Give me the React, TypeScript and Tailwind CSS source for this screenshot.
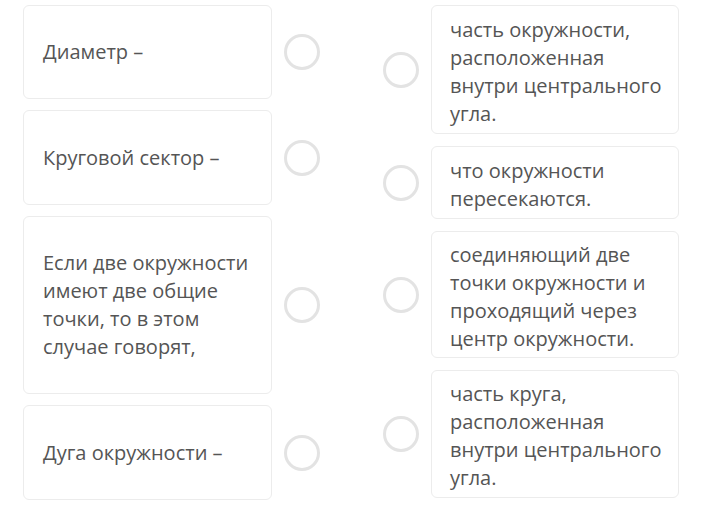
import React from "react";

type Item = { text: string; h: string };

const LEFT: Item[] = [
  { text: "Диаметр –", h: "h-[94px]" },
  { text: "Круговой сектор –", h: "h-[95px]" },
  {
    text: "Если две окружности имеют две общие точки, то в этом случае говорят,",
    h: "h-[178px]",
  },
  { text: "Дуга окружности –", h: "h-[95px]" },
];

const RIGHT: Item[] = [
  { text: "часть окружности, расположенная внутри центрального угла.", h: "h-[129px]" },
  { text: "что окружности пересекаются.", h: "h-[73px]" },
  {
    text: "соединяющий две точки окружности и проходящий через центр окружности.",
    h: "h-[127px]",
  },
  { text: "часть круга, расположенная внутри центрального угла.", h: "h-[128px]" },
];

const Circle = () => (
  <div className="w-[36px] h-[36px] shrink-0 rounded-full border-[3px] border-[#e3e3e3] bg-white" />
);

const Card: React.FC<{ item: Item; w: string; px: string }> = ({ item, w, px }) => (
  <div
    className={`${w} ${item.h} ${px} shrink-0 flex items-center rounded-md border border-[#ececec] bg-white text-[20px] leading-[28px] text-[#555555]`}
  >
    <p>{item.text}</p>
  </div>
);

export default function App() {
  return (
    <div
      className="w-[711px] h-[531px] bg-white overflow-hidden"
      style={{ fontFamily: '"Open Sans", "Noto Sans", sans-serif' }}
    >
      <div className="flex pl-[23px] pt-[5px]">
        <div className="flex flex-col gap-[11px]">
          {LEFT.map((item, i) => (
            <div key={i} className="flex items-center gap-[12px]">
              <Card item={item} w="w-[249px]" px="pl-[19px] pr-[10px]" />
              <Circle />
            </div>
          ))}
        </div>
        <div className="flex flex-col gap-[12px] ml-[63px]">
          {RIGHT.map((item, i) => (
            <div key={i} className="flex items-center gap-[12px]">
              <Circle />
              <Card item={item} w="w-[248px]" px="pl-[18px] pr-[8px] pt-[4px]" />
            </div>
          ))}
        </div>
      </div>
    </div>
  );
}
